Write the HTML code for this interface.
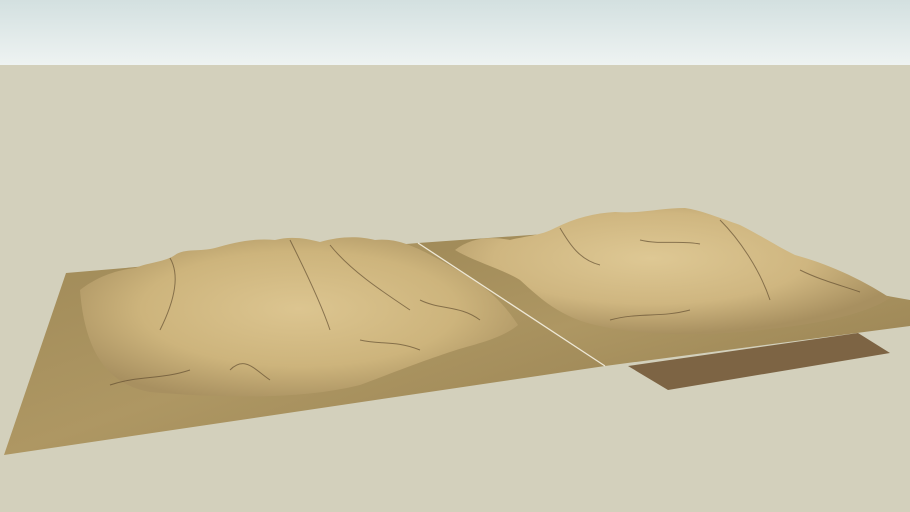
<!DOCTYPE html>
<html><head><meta charset="utf-8"><style>
html,body{margin:0;padding:0;width:910px;height:512px;overflow:hidden;background:#d3d0bc;}
svg{display:block}
</style></head><body>
<svg width="910" height="512" viewBox="0 0 910 512" xmlns="http://www.w3.org/2000/svg">
<defs>
<linearGradient id="sky" x1="0" y1="0" x2="0" y2="1">
<stop offset="0" stop-color="#d3e0e0"/><stop offset="1" stop-color="#eef3f2"/>
</linearGradient>
<linearGradient id="plate" x1="0" y1="0" x2="1" y2="1">
<stop offset="0" stop-color="#a08a58"/><stop offset="0.5" stop-color="#ae9763"/><stop offset="1" stop-color="#9a8454"/>
</linearGradient>
<radialGradient id="mtn1" cx="0.5" cy="0.45" r="0.6">
<stop offset="0" stop-color="#dcc590"/><stop offset="0.6" stop-color="#cdb47c"/><stop offset="1" stop-color="#a89060"/>
</radialGradient>
<radialGradient id="mtn2" cx="0.45" cy="0.4" r="0.6">
<stop offset="0" stop-color="#dec894"/><stop offset="0.6" stop-color="#cfb680"/><stop offset="1" stop-color="#a89060"/>
</radialGradient>
</defs>
<rect x="0" y="0" width="910" height="65" fill="url(#sky)"/>
<rect x="0" y="65" width="910" height="447" fill="#d3d0bc"/>
<polygon points="628,366 858,333 890,353 668,390" fill="#7d6444"/>
<polygon points="418,243 545,234 910,300 910,326 605,366" fill="url(#plate)"/>
<polygon points="66,273 418,243 605,366 4,455" fill="url(#plate)"/>
<!-- left mountain -->
<path d="M80,290 C95,278 115,270 135,268 C150,262 165,262 175,255 C185,248 200,252 215,248 C235,242 255,238 275,240 C290,236 305,238 320,242 C340,236 360,236 375,240 C395,238 410,245 425,252 C440,260 455,268 470,278 C490,290 505,305 518,325 C500,340 470,345 450,352 C420,362 400,370 360,385 C300,400 220,398 150,392 C110,385 85,355 80,290 Z" fill="url(#mtn1)"/>
<!-- right mountain -->
<path d="M455,250 C470,238 490,236 510,240 C525,236 540,236 555,228 C575,218 595,213 615,212 C640,214 660,208 685,208 C700,210 720,218 740,225 C760,235 775,245 795,255 C825,263 860,278 890,298 C860,318 800,326 760,330 C700,337 640,335 600,326 C560,318 540,298 520,280 C500,268 475,262 455,250 Z" fill="url(#mtn2)"/>
<g fill="none" stroke="#5e4a2e" stroke-width="1" opacity="0.65">
<path d="M170,258 C180,275 175,300 160,330"/>
<path d="M290,240 C300,260 320,300 330,330"/>
<path d="M330,245 C350,270 380,290 410,310"/>
<path d="M360,340 C380,345 395,340 420,350"/>
<path d="M230,370 C245,355 255,370 270,380"/>
<path d="M420,300 C440,310 460,305 480,320"/>
<path d="M560,228 C570,245 580,260 600,265"/>
<path d="M720,220 C740,240 760,270 770,300"/>
<path d="M610,320 C640,312 660,318 690,310"/>
<path d="M110,385 C140,375 160,380 190,370"/>
<path d="M640,240 C660,245 680,240 700,244"/>
<path d="M800,270 C820,280 840,285 860,292"/>
</g>
<line x1="418" y1="243" x2="605" y2="366" stroke="#eee8d6" stroke-width="1.3"/>
</svg>
</body></html>
